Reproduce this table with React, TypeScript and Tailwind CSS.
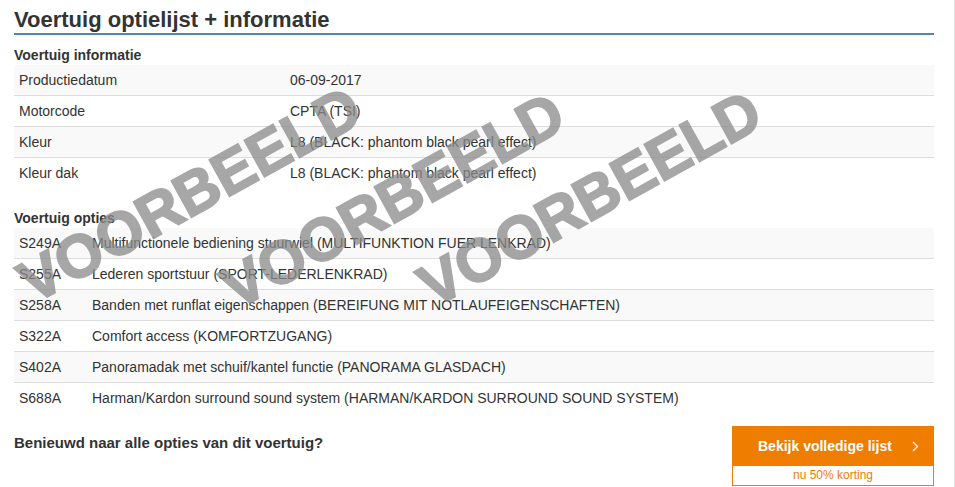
const vehicleInfo = [
  {label: "Productiedatum", value: "06-09-2017"},
  {label: "Motorcode", value: "CPTA (TSI)"},
  {label: "Kleur", value: "L8 (BLACK: phantom black pearl effect)"},
  {label: "Kleur dak", value: "L8 (BLACK: phantom black pearl effect)"},
];

const vehicleOptions = [
  {code: "S249A", text: "Multifunctionele bediening stuurwiel (MULTIFUNKTION FUER LENKRAD)"},
  {code: "S255A", text: "Lederen sportstuur (SPORT-LEDERLENKRAD)"},
  {code: "S258A", text: "Banden met runflat eigenschappen (BEREIFUNG MIT NOTLAUFEIGENSCHAFTEN)"},
  {code: "S322A", text: "Comfort access (KOMFORTZUGANG)"},
  {code: "S402A", text: "Panoramadak met schuif/kantel functie (PANORAMA GLASDACH)"},
  {code: "S688A", text: "Harman/Kardon surround sound system (HARMAN/KARDON SURROUND SOUND SYSTEM)"},
];

function rowClass(index: number) {
  const border = index === 0 ? "h-[30px]" : "h-[31px] border-t border-[#dddddd]";
  const stripe = index % 2 === 0 ? "bg-[#f9f9f9]" : "bg-white";
  return `flex items-center ${border} ${stripe}`;
}

const watermarks = [
  "left-[190px] top-[195px]",
  "left-[393px] top-[201px]",
  "left-[590px] top-[199px]",
];

export default function App() {
  return (
    <div className="relative h-[487px] w-[955px] overflow-hidden border-r border-[#e5e5e5] bg-white pl-[14px] pr-[20px] font-['Liberation_Sans',Arial,sans-serif] text-[14px] leading-[20px] text-[#333333]">
      <h2 className="border-b-2 border-[#4f86ad] pt-[7px] text-[22px] font-bold leading-[26px]">
        Voertuig optielijst + informatie
      </h2>

      <h3 className="mt-[10px] text-[14px] font-bold">Voertuig informatie</h3>
      <div>
        {vehicleInfo.map((row, index) => (
          <div key={row.label} className={rowClass(index)}>
            <div className="w-[271px] px-[5px]">{row.label}</div>
            <div className="flex-1 px-[5px]">{row.value}</div>
          </div>
        ))}
      </div>

      <h3 className="mt-[20px] text-[14px] font-bold">Voertuig opties</h3>
      <div>
        {vehicleOptions.map((row, index) => (
          <div key={row.code} className={rowClass(index)}>
            <div className="w-[73px] px-[5px]">{row.code}</div>
            <div className="flex-1 px-[5px]">{row.text}</div>
          </div>
        ))}
      </div>

      <div className="mt-[13px] flex items-start justify-between">
        <p className="mt-[7px] text-[15px] font-bold">Benieuwd naar alle opties van dit voertuig?</p>
        <div className="w-[202px]">
          <button
            type="button"
            className="flex h-[40px] w-full items-center bg-[#ef7d00] pl-[26px] text-[14px] font-bold text-white"
          >
            Bekijk volledige lijst
            <svg className="ml-[20px]" width="7" height="11" viewBox="0 0 7 11" fill="none">
              <path d="M1 1l4.5 4.5L1 10" stroke="white" strokeWidth="1.3" />
            </svg>
          </button>
          <div className="h-[20px] border border-t-0 border-[#ef7d00] text-center text-[12px] leading-[19px] text-[#ef7d00]">
            nu 50% korting
          </div>
        </div>
      </div>

      {/* watermark overlay */}
      <div className="pointer-events-none absolute inset-0 opacity-75">
        {watermarks.map((pos) => (
          <span
            key={pos}
            className={`absolute ${pos} -translate-x-1/2 -translate-y-1/2 rotate-[-29deg] whitespace-nowrap text-[60px] font-bold leading-none text-[#8a8a8a] [-webkit-text-stroke:2px_#8a8a8a]`}
          >
            VOORBEELD
          </span>
        ))}
      </div>
    </div>
  );
}
